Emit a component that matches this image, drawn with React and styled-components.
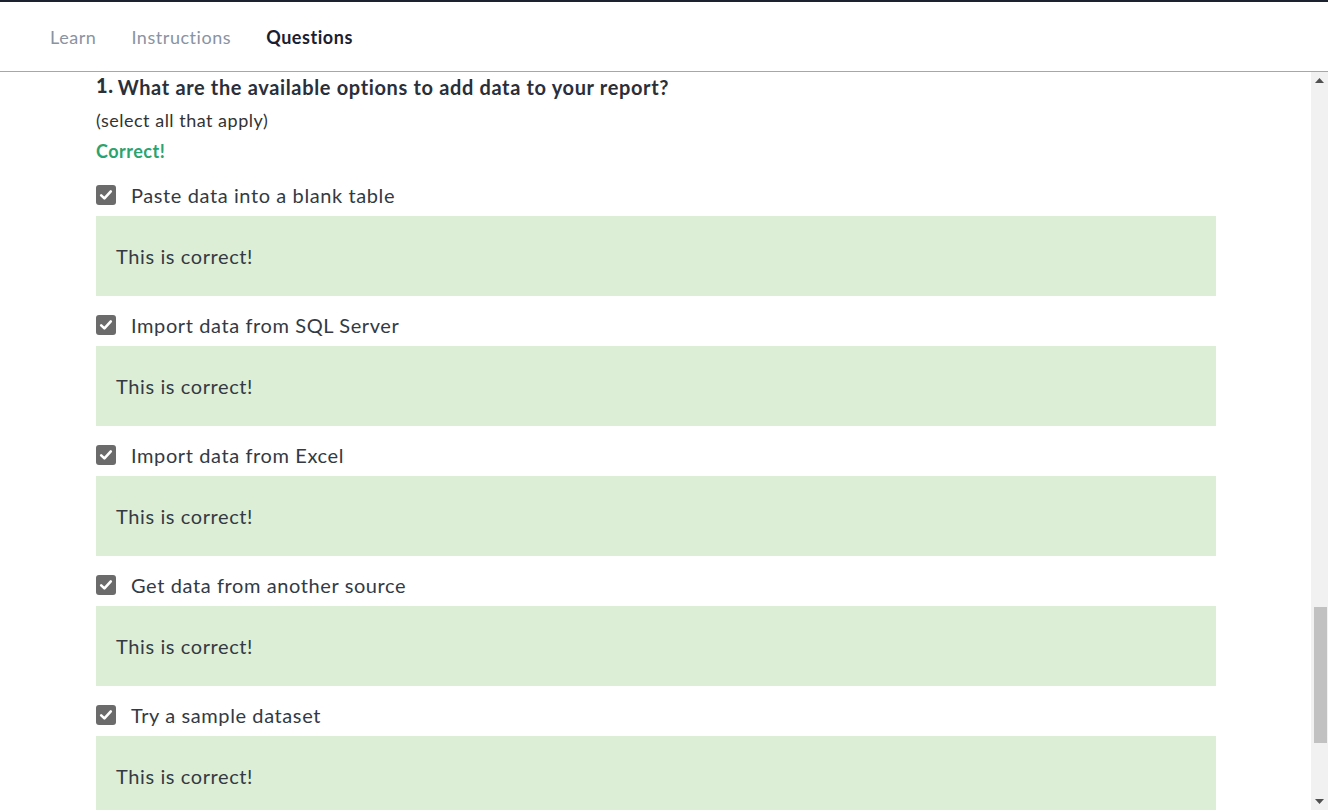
import React from 'react'
import styled, { createGlobalStyle } from 'styled-components'

const GlobalStyle = createGlobalStyle`
	html, body {
		margin: 0;
		padding: 0;
		background: #fff;
		overflow: hidden;
	}
	body {
		font-family: 'Lato', 'Noto Sans', sans-serif;
		color: #333;
	}
`

const Page = styled.div`
	height: 810px;
	display: flex;
	flex-direction: column;
	border-top: 2px solid #1d2231;
	box-sizing: border-box;
`

const TabBar = styled.nav`
	height: 69px;
	flex: none;
	display: flex;
	align-items: center;
	gap: 35px;
	padding-left: 50px;
	border-bottom: 1px solid #a3a7ae;
	box-sizing: content-box;
`

const Tab = styled.span`
	font-size: 18px;
	letter-spacing: 0.55px;
	font-weight: ${(p) => (p.active ? 700 : 400)};
	color: ${(p) => (p.active ? '#1b2030' : '#8993a2')};
	cursor: pointer;
`

const Body = styled.div`
	flex: 1;
	display: flex;
	min-height: 0;
`

const Scroller = styled.main`
	flex: 1;
	overflow: hidden;
	padding: 3px 95px 0 96px;
`

const Title = styled.h2`
	margin: 0;
	font-size: 20px;
	line-height: 24px;
	letter-spacing: 0.65px;
	font-weight: 700;
	color: #2b2f3a;

	b {
		position: relative;
		top: -2px;
		margin-right: 4px;
	}
`

const Hint = styled.p`
	margin: 10px 0 0;
	font-size: 18px;
	line-height: 22px;
	letter-spacing: 0.5px;
	color: #333;
`

const Verdict = styled.p`
	margin: 9px 0 4px;
	font-size: 18px;
	line-height: 22px;
	letter-spacing: 0.5px;
	font-weight: 700;
	color: #2ba36e;
`

const Option = styled.div`
	padding-top: 14px;
`

const OptionRow = styled.label`
	height: 30px;
	display: flex;
	align-items: center;
	gap: 15px;
	font-size: 20px;
	letter-spacing: 0.6px;
	color: #333a44;
	margin-bottom: 6px;
`

const Box = styled.span`
	width: 20px;
	height: 20px;
	border-radius: 3px;
	background: #6b6b6b;
	display: flex;
	align-items: center;
	justify-content: center;
`

const Feedback = styled.div`
	height: 80px;
	display: flex;
	align-items: center;
	padding-left: 20px;
	background: #ddeed7;
	font-size: 20px;
	letter-spacing: 0.6px;
	color: #333a44;
`

const ScrollTrack = styled.div`
	width: 17px;
	flex: none;
	background: #f1f1f1;
	display: flex;
	flex-direction: column;
	align-items: center;
`

const Arrow = styled.div`
	height: 17px;
	width: 17px;
	display: flex;
	align-items: center;
	justify-content: center;
`

const Rail = styled.div`
	flex: 1;
	width: 100%;
	padding-top: 518px;
	box-sizing: border-box;
`

const Thumb = styled.div`
	height: 136px;
	margin: 0 1px 0 3px;
	background: #c1c1c1;
`

const options = [
	'Paste data into a blank table',
	'Import data from SQL Server',
	'Import data from Excel',
	'Get data from another source',
	'Try a sample dataset',
]

const Check = () => (
	<Box>
		<svg width="14" height="14" viewBox="0 0 14 14">
			<path d="M2.2 7.4 L5.4 10.4 L11.8 3.4" fill="none" stroke="#fff" strokeWidth="2.6" strokeLinecap="round" strokeLinejoin="round" />
		</svg>
	</Box>
)

const App = () => (
	<Page>
		<GlobalStyle />
		<TabBar>
			<Tab>Learn</Tab>
			<Tab>Instructions</Tab>
			<Tab active>Questions</Tab>
		</TabBar>
		<Body>
			<Scroller>
				<Title>
					<b>1.</b>What are the available options to add data to your report?
				</Title>
				<Hint>(select all that apply)</Hint>
				<Verdict>Correct!</Verdict>
				{options.map((o) => (
					<Option key={o}>
						<OptionRow>
							<Check />
							{o}
						</OptionRow>
						<Feedback>This is correct!</Feedback>
					</Option>
				))}
			</Scroller>
			<ScrollTrack>
				<Arrow>
					<svg width="9" height="5" viewBox="0 0 9 5"><path d="M0 5 L4.5 0 L9 5 Z" fill="#505050" /></svg>
				</Arrow>
				<Rail>
					<Thumb />
				</Rail>
				<Arrow>
					<svg width="9" height="5" viewBox="0 0 9 5"><path d="M0 0 L9 0 L4.5 5 Z" fill="#505050" /></svg>
				</Arrow>
			</ScrollTrack>
		</Body>
	</Page>
)

export default App
